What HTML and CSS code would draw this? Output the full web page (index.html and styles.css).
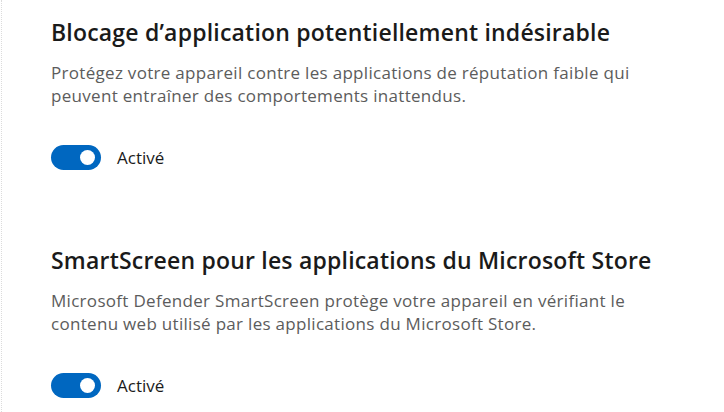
FILE: index.html
```html
<!DOCTYPE html>
<html lang="fr">
<head>
<meta charset="utf-8">
<link rel="stylesheet" href="styles.css">
</head>
<body>
<main class="page">
  <section class="setting">
    <h2 class="setting-title">Blocage d’application potentiellement indésirable</h2>
    <p class="setting-desc">Protégez votre appareil contre les applications de réputation faible qui peuvent entraîner des comportements inattendus.</p>
    <div class="toggle-row">
      <span class="toggle is-on" role="switch" aria-checked="true"></span>
      <span class="toggle-label">Activé</span>
    </div>
  </section>
  <section class="setting">
    <h2 class="setting-title">SmartScreen pour les applications du Microsoft Store</h2>
    <p class="setting-desc">Microsoft Defender SmartScreen protège votre appareil en vérifiant le contenu web utilisé par les applications du Microsoft Store.</p>
    <div class="toggle-row">
      <span class="toggle is-on" role="switch" aria-checked="true"></span>
      <span class="toggle-label">Activé</span>
    </div>
  </section>
</main>
</body>
</html>
```
FILE: styles.css
```css
html, body {
  margin: 0;
  padding: 0;
  background: #ffffff;
}
body {
  font-family: "Open Sans", "Noto Sans", sans-serif;
  color: #1b1b1b;
}
.page {
  margin-left: 1px;
  border-left: 1px dotted #dcdcdc;
  min-height: 412px;
  box-sizing: border-box;
  padding: 17px 0 0 49px;
  display: flex;
  flex-direction: column;
  gap: 75px;
}
.setting {
  display: flex;
  flex-direction: column;
}
.setting-title {
  margin: 0;
  font-size: 23px;
  line-height: 30px;
  font-weight: 600;
  letter-spacing: 0.2px;
  color: #1a1a1a;
}
.setting-desc {
  margin: 14px 0 0;
  width: 620px;
  font-size: 17px;
  line-height: 23px;
  letter-spacing: 0.3px;
  color: #5c5c5c;
}
.toggle-row {
  margin-top: 38px;
  display: flex;
  align-items: center;
  gap: 16px;
}
.toggle {
  position: relative;
  width: 50px;
  height: 25px;
  border-radius: 13px;
  background: #0067c0;
  flex: none;
}
.toggle::after {
  content: "";
  position: absolute;
  top: 5px;
  right: 6px;
  width: 15px;
  height: 15px;
  border-radius: 50%;
  background: #ffffff;
}
.toggle-label {
  font-size: 17px;
  line-height: 23px;
  color: #1b1b1b;
}
```
